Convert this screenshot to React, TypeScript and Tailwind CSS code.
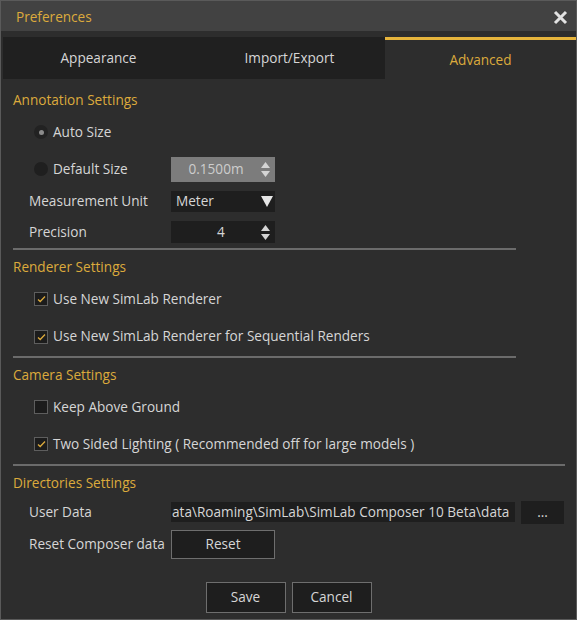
import React from "react";

const FONT = { fontFamily: '"Open Sans", "Noto Sans", sans-serif' };

function SectionTitle({ children }: { children: React.ReactNode }) {
  return (
    <div className="flex h-[34px] items-center pl-[12px] text-[13.6px] text-[#dcaa3c]">
      {children}
    </div>
  );
}

function Separator({ wide }: { wide?: boolean }) {
  return <div className={`ml-[12px] h-[2px] bg-[#6b6b6b] ${wide ? "w-[552px]" : "w-[503px]"}`} />;
}

function Check({ checked }: { checked: boolean }) {
  return (
    <span className="flex h-[14px] w-[14px] shrink-0 items-center justify-center border border-[#5e5e5e] bg-[#1c1c1c]">
      {checked && (
        <svg width="9" height="8" viewBox="0 0 9 8" fill="none">
          <path d="M1 4.5L3.2 6.5L8 1.5" stroke="#dcaa3c" strokeWidth="1.3" />
        </svg>
      )}
    </span>
  );
}

function CheckRow({ checked, label, h }: { checked: boolean; label: string; h: string }) {
  return (
    <div className={`flex items-center gap-[5px] pl-[33px] ${h}`}>
      <Check checked={checked} />
      <span className="text-[13.6px] text-[#d6d6d6]">{label}</span>
    </div>
  );
}

function SpinArrows() {
  return (
    <div className="flex flex-col items-center gap-[3px]">
      <svg width="9" height="6" viewBox="0 0 9 6">
        <path d="M4.5 0L9 6H0z" fill="#d4d4d4" />
      </svg>
      <svg width="9" height="6" viewBox="0 0 9 6">
        <path d="M0 0H9L4.5 6z" fill="#d4d4d4" />
      </svg>
    </div>
  );
}

export default function App() {
  return (
    <div
      className="flex h-[620px] w-[577px] flex-col border border-[#5a5a5a] bg-[#2d2d2d]"
      style={FONT}
    >
      {/* Title bar */}
      <div className="flex h-[30px] shrink-0 items-center justify-between bg-[#424242] pl-[15px] pr-[8px] pt-[2px]">
        <span className="text-[13.6px] text-[#dcaa3c]">Preferences</span>
        <svg width="15" height="15" viewBox="0 0 15 15">
          <path d="M2 2L13 13M13 2L2 13" stroke="#e2e2e2" strokeWidth="3" />
        </svg>
      </div>

      {/* Tabs */}
      <div className="ml-[2px] mt-[6px] flex h-[42px] shrink-0">
        <div className="flex flex-1 items-center justify-center bg-[#202020] text-[13.6px] text-[#d6d6d6]">
          Appearance
        </div>
        <div className="flex flex-1 items-center justify-center bg-[#202020] text-[13.6px] text-[#d6d6d6]">
          Import/Export
        </div>
        <div className="flex flex-1 items-center justify-center border-t-[3px] border-[#e6b43c] pt-[1px] text-[13.6px] text-[#dcaa3c]">
          Advanced
        </div>
      </div>

      <div className="h-[4px]" />
      <SectionTitle>Annotation Settings</SectionTitle>

      {/* Annotation rows */}
      <div className="flex h-[30px] items-center gap-[5px] pl-[33px]">
        <span className="flex h-[14px] w-[14px] items-center justify-center rounded-full bg-[#222222]">
          <span className="h-[5px] w-[5px] rounded-full bg-[#8c8c8c]" />
        </span>
        <span className="text-[13.6px] text-[#d6d6d6]">Auto Size</span>
      </div>
      <div className="flex h-[44px] items-center">
        <div className="flex w-[170px] items-center gap-[5px] pl-[33px]">
          <span className="h-[14px] w-[14px] rounded-full bg-[#1f1f1f]" />
          <span className="text-[13.6px] text-[#d6d6d6]">Default Size</span>
        </div>
        <div className="flex h-[25px] w-[104px] items-center bg-[#7c7c7c] pr-[5px]">
          <span className="flex-1 text-center text-[13.6px] text-[#cdcdcd]">0.1500m</span>
          <SpinArrows />
        </div>
      </div>
      <div className="flex h-[20px] items-center">
        <span className="w-[170px] pl-[28px] text-[13.6px] text-[#d6d6d6]">Measurement Unit</span>
        <div className="flex h-[21px] w-[104px] items-center justify-between bg-[#1e1e1e] pl-[5px] pr-[2px]">
          <span className="text-[13.6px] text-[#d6d6d6]">Meter</span>
          <svg width="12" height="11" viewBox="0 0 12 11">
            <path d="M0 0H12L6 11z" fill="#e6e6e6" />
          </svg>
        </div>
      </div>
      <div className="flex h-[37px] items-start pt-[10px]">
        <span className="flex h-[22px] w-[170px] items-center pl-[28px] text-[13.6px] text-[#d6d6d6]">
          Precision
        </span>
        <div className="flex h-[22px] w-[104px] items-center bg-[#1e1e1e] pr-[5px]">
          <span className="flex-1 pl-[10px] text-center text-[13.6px] text-[#d6d6d6]">4</span>
          <SpinArrows />
        </div>
      </div>
      <Separator />

      <SectionTitle>Renderer Settings</SectionTitle>
      <CheckRow checked label="Use New SimLab Renderer" h="h-[30px]" />
      <CheckRow checked label="Use New SimLab Renderer for Sequential Renders" h="h-[42px] pt-[3px]" />
      <Separator />

      <SectionTitle>Camera Settings</SectionTitle>
      <CheckRow checked={false} label="Keep Above Ground" h="h-[30px]" />
      <CheckRow checked label="Two Sided Lighting ( Recommended off for large models )" h="h-[42px] pt-[2px]" />
      <Separator wide />

      <SectionTitle>Directories Settings</SectionTitle>
      <div className="flex h-[24px] items-center">
        <span className="w-[170px] pl-[28px] text-[13.6px] text-[#d6d6d6]">User Data</span>
        <div className="flex h-[20px] w-[344px] items-center overflow-hidden bg-[#1e1e1e] pl-[1px]">
          <span className="text-[13.6px] whitespace-nowrap text-[#d6d6d6]">
            ata\Roaming\SimLab\SimLab Composer 10 Beta\data
          </span>
        </div>
        <div className="ml-[6px] flex h-[23px] w-[43px] items-center justify-center bg-[#1e1e1e] text-[13.6px] text-[#d6d6d6]">
          ...
        </div>
      </div>
      <div className="flex h-[40px] items-center">
        <span className="w-[170px] pl-[28px] text-[13.6px] text-[#d6d6d6]">Reset Composer data</span>
        <button className="h-[29px] w-[104px] border border-[#6e6e6e] bg-[#1e1e1e] text-[13.6px] text-[#d6d6d6]">
          Reset
        </button>
      </div>

      <div className="flex flex-1 items-start justify-center gap-[6px] pt-[18px]">
        <button className="h-[31px] w-[80px] border border-[#6e6e6e] bg-[#1e1e1e] text-[13.6px] text-[#d6d6d6]">
          Save
        </button>
        <button className="h-[31px] w-[80px] border border-[#6e6e6e] bg-[#1e1e1e] text-[13.6px] text-[#d6d6d6]">
          Cancel
        </button>
      </div>
    </div>
  );
}
